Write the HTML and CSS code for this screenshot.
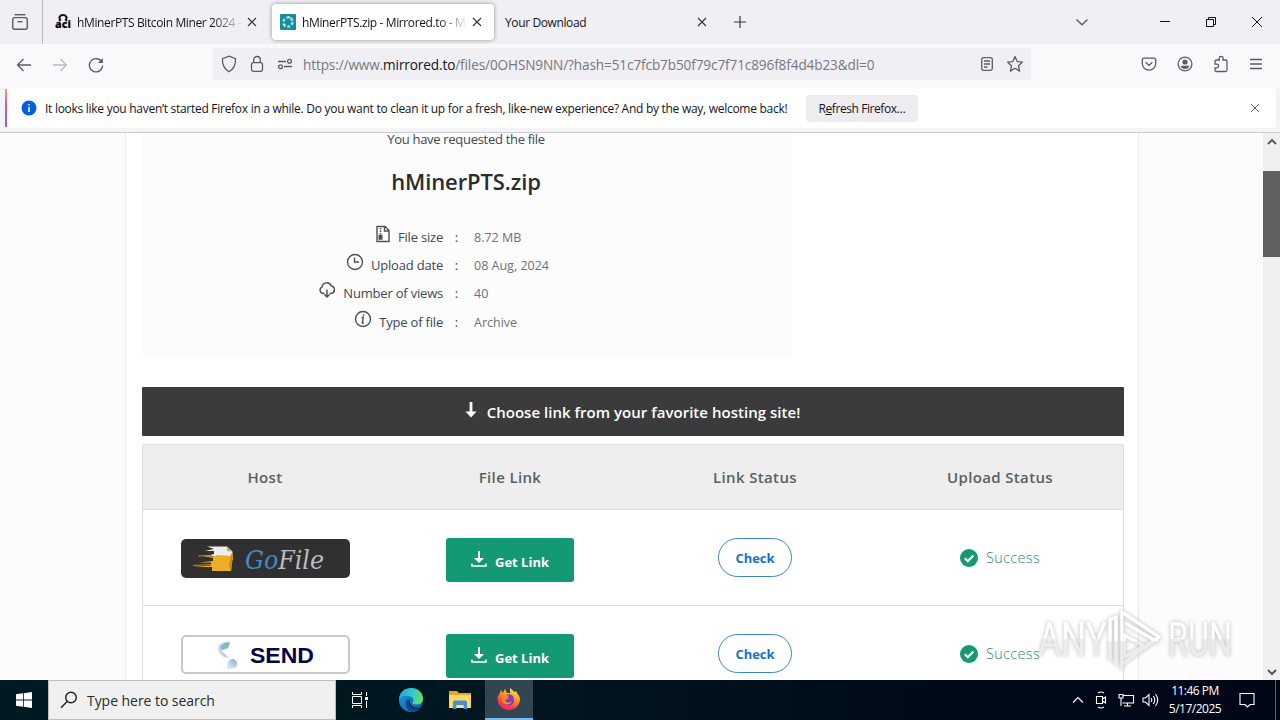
FILE: index.html
```html
<!DOCTYPE html>
<html lang="en">
<head>
    <meta charset="UTF-8">
    <meta name="viewport" content="width=device-width, initial-scale=1.0">
    <title>hMinerPTS.zip - Mirrored.to</title>
    <link rel="stylesheet" href="styles.css">
</head>
<body>
    <div class="tabbar">
        <div class="tab-view">
            <svg width="18" height="18" viewBox="0 0 18 18" fill="none" stroke="#5b5b66" stroke-width="1.4"><path d="M3.5 1.7h11"/><rect x="1.7" y="4.6" width="14.6" height="11.6" rx="2.2"/><path d="M6.5 8.7h5"/></svg>
        </div>
        <div class="tab tab-first">
            <svg class="favicon" width="16" height="16" viewBox="0 0 16 16"><path d="M3.800 6.400h1.700M10.500 6.400h1.700M5.800 6.600C3 3.800 5 1 8 1s5 2.800 2.200 5.600" fill="none" stroke="#111" stroke-width="2"/><text x="0" y="14" class="favicon-text" textLength="16" lengthAdjust="spacingAndGlyphs">aci</text></svg>
            <span class="tab-title fade">hMinerPTS Bitcoin Miner 2024 -</span>
            <svg class="tab-close" width="10" height="10" viewBox="0 0 10 10"><path d="M1 1l8 8M9 1L1 9"/></svg>
        </div>
        <div class="tab tab-active">
            <svg width="16" height="16" viewBox="0 0 16 16"><rect width="16" height="16" rx="1" fill="#168c9c"/><circle cx="8" cy="8" r="4.500" fill="none" stroke="#8adfe0" stroke-width="2.600" stroke-dasharray="3 1.700"/><path d="M8 2.500l3 1.500M3 10l2 3" stroke="#d9ee9c" stroke-width="1.300"/></svg>
            <span class="tab-title fade">hMinerPTS.zip - Mirrored.to - M</span>
            <svg class="tab-close" width="10" height="10" viewBox="0 0 10 10"><path d="M1 1l8 8M9 1L1 9"/></svg>
        </div>
        <div class="tab tab-last">
            <span class="tab-title">Your Download</span>
            <svg class="tab-close" width="10" height="10" viewBox="0 0 10 10"><path d="M1 1l8 8M9 1L1 9"/></svg>
        </div>
        <svg class="new-tab" width="12" height="12" viewBox="0 0 12 12"><path d="M6 0v12M0 6h12"/></svg>
        <div class="window-buttons">
            <svg width="14" height="8" viewBox="0 0 14 8"><path d="M1.500 1.500L7 6.800l5.500-5.300" fill="none" stroke="#5b5b66" stroke-width="1.400"/></svg>
            <svg class="win-min" width="10" height="10" viewBox="0 0 10 10"><path d="M0 4.500h10" stroke="#111"/></svg>
            <svg class="win-max" width="10" height="10" viewBox="0 0 10 10" fill="none" stroke="#111"><path d="M.5 2.500h7v7h-7zM2.500 2.500v-2h7v7h-2"/></svg>
            <svg class="win-close" width="10" height="10" viewBox="0 0 10 10"><path d="M0 0l10 10M10 0L0 10" stroke="#111"/></svg>
        </div>
    </div>

    <div class="toolbar">
        <div class="nav-buttons">
            <svg width="16" height="16" viewBox="0 0 16 16"><path d="M15 8H1.500M7.500 2l-6 6 6 6"/></svg>
            <svg class="disabled" width="16" height="16" viewBox="0 0 16 16"><path d="M1 8h13.500M8.500 2l6 6-6 6"/></svg>
            <svg width="16" height="16" viewBox="0 0 16 16"><path d="M14 5.500A6.600 6.600 0 1 0 14.600 8.500"/><path d="M14.800 1v5H10z" fill="#5b5b66" stroke="none"/></svg>
        </div>
        <div class="urlbar">
            <svg width="16" height="18" viewBox="0 0 16 18"><path d="M8 1.200l6.500 2.500c.4 5.500-1.500 10-6.500 13-5-3-6.900-7.500-6.500-13z"/></svg>
            <svg width="14" height="18" viewBox="0 0 14 18"><rect x="1.500" y="7.700" width="11" height="8.600" rx="2"/><path d="M3.700 7.500V4.800a3.300 3.300 0 0 1 6.600 0v2.700"/></svg>
            <svg width="16" height="12" viewBox="0 0 16 12"><path d="M1 3.500h8M7 8.500h8"/><circle cx="12.500" cy="3.200" r="1.900"/><circle cx="3.500" cy="8.800" r="1.900"/></svg>
            <span class="url">https://www.<b>mirrored.to</b>/files/0OHSN9NN/?hash=51c7fcb7b50f79c7f71c896f8f4d4b23&amp;dl=0</span>
            <svg class="reader" width="14" height="16" viewBox="0 0 14 16"><rect x="1.700" y="1.700" width="10.600" height="12.600" rx="1.700"/><path d="M4 5h6M4 8h6M4 11h3.500"/></svg>
            <svg width="18" height="18" viewBox="0 0 18 18"><path stroke-linejoin="round" d="M9 1.600l2.200 5 5.200.5-3.900 3.600 1.100 5.400L9 13.300l-4.600 2.800 1.100-5.400L1.600 7.100l5.200-.5z"/></svg>
        </div>
        <div class="toolbar-icons">
            <svg width="16" height="16" viewBox="0 0 16 16"><path d="M3 2.200h10a1.700 1.700 0 0 1 1.700 1.700v3.600a6.600 6.600 0 0 1-13.400 0V3.900A1.700 1.700 0 0 1 3 2.200zM4.700 6.200L8 9.400l3.300-3.200"/></svg>
            <svg width="16" height="16" viewBox="0 0 16 16"><circle cx="8" cy="8" r="6.900"/><circle cx="8" cy="6" r="2.600" fill="#5b5b66" stroke="none"/><path d="M3.800 9.700h8.400C12 12 10 13 8 13s-4-1-4.200-3.300z" fill="#5b5b66" stroke="none"/></svg>
            <svg width="16" height="18" viewBox="0 0 16 18"><path d="M2 9.200V6.500Q2 5 3.500 5H6.300V3.300a1.800 1.800 0 0 1 3.700 0V5h2.500Q14 5 14 6.500V15q0 1.500-1.500 1.500h-9Q2 16.500 2 15v-2.200h1.800a1.800 1.800 0 0 0 0-3.600z"/></svg>
            <svg width="14" height="12" viewBox="0 0 14 12"><path d="M1 1.500h12M1 6h12M1 10.500h12"/></svg>
        </div>
    </div>

    <div class="notice-wrap">
        <div class="notice">
            <svg width="16" height="16" viewBox="0 0 16 16"><circle cx="8" cy="8" r="7.500" fill="#0060df"/><path d="M8 7v5M8 4v1.500" stroke="#fff" stroke-width="1.500"/></svg>
            <span class="notice-text">It looks like you haven’t started Firefox in a while. Do you want to clean it up for a fresh, like-new experience? And by the way, welcome back!</span>
            <span class="refresh-btn">R<u>e</u>fresh Firefox…</span>
            <svg class="notice-close" width="10" height="10" viewBox="0 0 10 10"><path d="M1 1l8 8M9 1L1 9" stroke="#5b5b66"/></svg>
        </div>
    </div>

    <div class="viewport">
        <div class="page">
            <div class="container">
                <div class="file-box">
                    <p class="requested">You have requested the file</p>
                    <h1>hMinerPTS.zip</h1>
                    <div class="file-info">
                        <div class="label">
                            <svg width="16" height="18" viewBox="0 0 16 18"><path d="M2 1.500h8l4 4v11H2zM9.500 1.500V6H14"/><path d="M5.500 3v7" stroke-dasharray="1.500 1"/><path d="M4.200 10.500h2.600V14H4.200z" fill="#444"/></svg>
                            <span>File size</span>
                        </div>
                        <div class="colon">:</div><div class="value">8.72 MB</div>
                        <div class="label">
                            <svg width="18" height="18" viewBox="0 0 18 18"><circle cx="9" cy="9" r="7.500"/><path d="M8.500 4.500V9H13"/></svg>
                            <span>Upload date</span>
                        </div>
                        <div class="colon">:</div><div class="value">08 Aug, 2024</div>
                        <div class="label">
                            <svg width="18" height="18" viewBox="0 0 18 18"><path d="M6.500 12.500H5A3.300 3.300 0 0 1 4 6.200 4.800 4.800 0 0 1 13.300 5 3.800 3.800 0 0 1 13 12.500h-1.500M9 8.500V16M6.500 13.500L9 16l2.500-2.500"/></svg>
                            <span>Number of views</span>
                        </div>
                        <div class="colon">:</div><div class="value">40</div>
                        <div class="label">
                            <svg width="18" height="18" viewBox="0 0 18 18"><circle cx="9" cy="9" r="7.500"/><path d="M7.500 7.500h1.800L8.300 13h1.500M9.600 4.300v1.500"/></svg>
                            <span>Type of file</span>
                        </div>
                        <div class="colon">:</div><div class="value">Archive</div>
                    </div>
                </div>

                <div class="choose">
                    <svg width="12" height="18" viewBox="0 0 12 18"><path d="M4.600 1h2.800v9.500H11.500L6 16.500.5 10.500h4.100z" fill="#fff"/></svg>
                    <span>Choose link from your favorite hosting site!</span>
                </div>

                <div class="hosts">
                    <div class="row head">
                        <div>Host</div><div>File Link</div><div>Link Status</div><div>Upload Status</div>
                    </div>
                    <div class="row">
                        <div>
                            <svg class="host-logo gofile" width="169" height="39" viewBox="0 0 169 39">
                                <path d="M26 7.500h20l5.500 5V21H33v-4H25l8-2v-3h-9l9-2z" fill="#eee"/>
                                <path d="M46 7.500v4.500l5.500.5z" fill="#c9a96a"/>
                                <path d="M12 26.500l18-1M17 17l14-.5" stroke="#b98a28"/>
                                <path d="M20 16.500l13 1 3-1.500 16 1-2 15H31v-4H13l17-1.500v-3H18l14-1.500v-3z" fill="#edaf25"/>
                                <path d="M52 14l-2 18-2-5 2-12z" fill="#c98a1c"/>
                                <text x="64" y="30" class="gofile-text" textLength="79" lengthAdjust="spacingAndGlyphs"><tspan fill="#4488c4">Go</tspan><tspan fill="#b9bcc0">File</tspan></text>
                            </svg>
                        </div>
                        <div>
                            <a class="get-link"><svg width="16" height="18" viewBox="0 0 16 18"><path d="M7 1h2v7h4l-5 5-5-5h4z" fill="#fff"/><path d="M1 13.500V16h14v-2.500" fill="none" stroke="#fff" stroke-width="1.500"/></svg><span>Get Link</span></a>
                        </div>
                        <div><a class="check">Check</a></div>
                        <div class="success">
                            <svg width="18" height="18" viewBox="0 0 18 18"><circle cx="9" cy="9" r="9" fill="#149973"/><path d="M4.800 9.200l3 3 5.500-5.800" fill="none" stroke="#fff" stroke-width="2.200"/></svg>
                            <span>Success</span>
                        </div>
                    </div>
                    <div class="row">
                        <div>
                            <svg class="host-logo send" width="169" height="39" viewBox="0 0 169 39">
                                <defs>
                                    <linearGradient id="sendTop" x1="0" y1="1" x2="1" y2="0"><stop offset="0" stop-color="#d7edf8"/><stop offset=".45" stop-color="#a9cde0"/><stop offset="1" stop-color="#f5fafc"/></linearGradient>
                                    <linearGradient id="sendBottom" x1="0" y1="1" x2="1" y2="0"><stop offset="0" stop-color="#e8f5fb"/><stop offset="1" stop-color="#83acc6"/></linearGradient>
                                </defs>
                                <path d="M44 7l5-2.500v6L46 14l-6 1 8 8-5-1c-5-3-7-7-5-11 1-2 3-3 6-4z" fill="url(#sendTop)"/>
                                <path d="M43 8l6-1-2 6-6 2-1-3z" fill="#8ab4cd"/>
                                <path d="M51 24c3 0 5 2 5 5s-3 5-10 5c0-6 1-9 5-10z" fill="url(#sendBottom)"/>
                                <text x="69" y="28" class="send-text" textLength="64" lengthAdjust="spacingAndGlyphs">SEND</text>
                            </svg>
                        </div>
                        <div>
                            <a class="get-link"><svg width="16" height="18" viewBox="0 0 16 18"><path d="M7 1h2v7h4l-5 5-5-5h4z" fill="#fff"/><path d="M1 13.500V16h14v-2.500" fill="none" stroke="#fff" stroke-width="1.500"/></svg><span>Get Link</span></a>
                        </div>
                        <div><a class="check">Check</a></div>
                        <div class="success">
                            <svg width="18" height="18" viewBox="0 0 18 18"><circle cx="9" cy="9" r="9" fill="#149973"/><path d="M4.800 9.200l3 3 5.500-5.800" fill="none" stroke="#fff" stroke-width="2.200"/></svg>
                            <span>Success</span>
                        </div>
                    </div>
                </div>
            </div>
        </div>
        <div class="scrollbar">
            <svg width="10" height="7" viewBox="0 0 10 7"><path d="M1 6l4-4 4 4"/></svg>
            <div class="thumb"></div>
            <svg width="10" height="7" viewBox="0 0 10 7"><path d="M1 1l4 4 4-4"/></svg>
        </div>
    </div>

    <!-- watermark over the page -->
    <svg class="watermark" width="200" height="72" viewBox="0 0 200 72">
        <defs><linearGradient id="wm" x1="0" y1="0" x2="0" y2="1"><stop offset=".5" stop-color="#fff"/><stop offset=".5" stop-color="#e9e9e9"/></linearGradient></defs>
        <text x="2" y="50" textLength="69" lengthAdjust="spacingAndGlyphs">ANY</text>
        <path d="M74 55V14l6-3v48M86 64V6l37 25-37 27M89 17l33 19M88 29v22l20-11z" fill="none" stroke-width="3.500" stroke-linejoin="round"/>
        <text x="132" y="50" textLength="64" lengthAdjust="spacingAndGlyphs">RUN</text>
    </svg>

    <div class="taskbar">
        <div class="start">
            <svg width="16" height="16" viewBox="0 0 16 16" fill="#fff"><path d="M0 2.300l7-1V7.600H0zM7.800 1.200L16 0v7.600H7.800zM0 8.400h7v6.300l-7-1zM7.800 8.400H16V16l-8.200-1.200z"/></svg>
        </div>
        <div class="search">
            <svg width="18" height="18" viewBox="0 0 18 18" fill="none" stroke="#222" stroke-width="1.400"><circle cx="11" cy="6.500" r="5.300"/><path d="M7.200 10.500L1 16.700"/></svg>
            <span>Type here to search</span>
        </div>
        <div class="task-icon">
            <svg width="18" height="16" viewBox="0 0 18 16" fill="none" stroke="#fff"><path d="M1.500 0v2.500h9V0M1.500 16v-2.500h9V16M1.500 4.500h9v7h-9zM15.500 0v4M15.500 9v7"/><path d="M14 5h3v3h-3z" fill="#fff" stroke="none"/></svg>
        </div>
        <div class="task-icon edge">
            <svg width="26" height="26" viewBox="0 0 26 26">
                <defs>
                    <linearGradient id="edgeTop" x1="0" y1=".3" x2="1" y2=".5"><stop offset="0" stop-color="#2a9fe0"/><stop offset=".5" stop-color="#31c5cf"/><stop offset="1" stop-color="#67e05c"/></linearGradient>
                    <linearGradient id="edgeBottom" x1="0" y1="0" x2="1" y2="1"><stop offset="0" stop-color="#1b9be0"/><stop offset="1" stop-color="#1257a8"/></linearGradient>
                </defs>
                <circle cx="13" cy="13" r="12" fill="url(#edgeBottom)"/>
                <path d="M1 13C1 6 6 1 13 1s12 5 12 10.500c0 4-3 6-6.500 6-3 0-4.500-1-4-2 2-2.500.5-6-4-6.500C6 8.500 2 10 1 13z" fill="url(#edgeTop)"/>
                <path d="M12 12c-4 5 0 11 6 11 2 0 4-1 5.500-3-4 1.500-9 1-11-3-1-2-.5-4-.5-5z" fill="#04233f"/>
                <path d="M9 12c-3 4-1 11 5 13 4 0 7-2 9-5-5 4-14 1-12-7z" fill="#114a8b"/>
            </svg>
        </div>
        <div class="task-icon explorer">
            <svg width="22" height="20" viewBox="0 0 22 20"><path d="M0 1h8l2 2h12v15H0z" fill="#e8a320"/><path d="M0 5h22v13H0z" fill="#ffd767"/><path d="M4 19v-6.500q0-2 2-2h10q2 0 2 2V19h-3.500v-4h-7v4z" fill="#3f92cf"/><path d="M7.500 15h7v3h-7z" fill="#ffe08a"/></svg>
        </div>
        <div class="task-icon running">
            <svg width="24" height="24" viewBox="0 0 24 24">
                <defs><linearGradient id="fox" x1=".8" y1="0" x2=".3" y2="1"><stop offset="0" stop-color="#fff04a"/><stop offset=".4" stop-color="#ff9a1f"/><stop offset=".75" stop-color="#ff4040"/><stop offset="1" stop-color="#e81e72"/></linearGradient></defs>
                <path d="M3 6l1-3 2 3 2-4 2 4 3 0V1c2 1 3 3 4 4l2-1c0 2 4 4 4 9a11.300 11.300 0 0 1-22.500 0c0-3 1-5 2.500-7z" fill="url(#fox)"/>
                <path d="M9 8c4-2 8 0 8 5a5 5 0 0 1-10 1l4-2c1-1 0-2-2-4z" fill="#7a3bd8"/>
                <path d="M5 9c2-2 5-1 7 0-1 2-4 2-4 4 0 3 5 3 7 1-1 4-8 5-10 0-.5-2-.5-3 0-5z" fill="#ff8a20"/>
            </svg>
        </div>
        <div class="tray">
            <svg width="12" height="8" viewBox="0 0 12 8"><path d="M1 6.500L6 1.500l5 5"/></svg>
            <svg width="12" height="18" viewBox="0 0 12 18"><path d="M3 2q3-2 6 0M3 16q3 2 6 0M1.500 5.500h6v7h-6zM7.500 8l3-2v6l-3-2"/></svg>
            <svg width="17" height="14" viewBox="0 0 17 14"><path d="M5.500 2.500h10v7.500H4.500M9.500 10v3M6 13h7M1 1.500h4v3.500H1zM3 5v8"/></svg>
            <svg class="volume" width="17" height="14" viewBox="0 0 17 14"><path d="M1 5h2.500L7 1.500v11L3.500 9H1zM9 5q1.500 2 0 4M11.300 3q3 4 0 8M13.500 1q4.500 6 0 12"/></svg>
            <div class="clock"><div>11:46 PM</div><div class="date">5/17/2025</div></div>
            <svg width="16" height="18" viewBox="0 0 16 18"><path d="M1 2.500h14v11h-4L8.500 16 6 13.500H1z"/></svg>
        </div>
    </div>
</body>
</html>
```
FILE: styles.css
```css
* {
    box-sizing: border-box;
}
body {
    margin: 0;
    width: 1280px;
    height: 720px;
    overflow: hidden;
    display: flex;
    flex-direction: column;
    font-family: "Open Sans", "Noto Sans", sans-serif;
    font-size: 12px;
    color: #15141a;
    background: #fff;
}
svg {
    flex: none;
    display: block;
}

/* tabs */
.tabbar {
    height: 44px;
    flex: none;
    display: flex;
    align-items: center;
    background: #f0f0f4;
}
.tab-view {
    width: 43px;
    height: 44px;
    padding-left: 11px;
    display: flex;
    align-items: center;
    border-right: 1px solid #b5b5bb;
}
.tab {
    display: flex;
    align-items: center;
    height: 36px;
}
.tab-first {
    width: 221px;
    padding: 0 7px 0 12px;
    margin-right: 8px;
}
.tab-active {
    width: 222px;
    padding: 0 12px 0 8px;
    background: #fff;
    border-radius: 4px;
    box-shadow: 0 0 4px rgba(0,0,0,0.4);
}
.tab-last {
    width: 222px;
    padding: 0 9px 0 11px;
}
.tab-title {
    flex: 1;
    white-space: nowrap;
    letter-spacing: -0.38px;
}
.tab svg + .tab-title {
    margin: 0 4px 0 6px;
}
.fade {
    mask-image: linear-gradient(to left, transparent, #000 30px);
}
.tab-close, .new-tab {
    stroke: #38383d;
    stroke-width: 1.2;
}
.new-tab {
    margin-left: 18px;
}
.favicon {
    overflow: visible;
}
.favicon-text {
    font-family: "Open Sans", sans-serif;
    font-size: 10px;
    font-weight: 800;
}
.window-buttons {
    display: flex;
    align-items: center;
    margin-left: auto;
    padding-right: 18px;
}
.win-min { margin-left: 71px; }
.win-max { margin-left: 36px; }
.win-close { margin-left: 36px; }

/* toolbar */
.toolbar {
    height: 44px;
    flex: none;
    display: flex;
    padding-top: 4px;
    background: #f9f9fb;
}
.toolbar svg {
    fill: none;
    stroke: #5b5b66;
    stroke-width: 1.3;
}
.nav-buttons {
    display: flex;
    align-items: center;
    gap: 20px;
    width: 213px;
    height: 33px;
    padding-left: 16px;
}
.nav-buttons .disabled {
    opacity: 0.4;
}
.urlbar {
    display: flex;
    align-items: center;
    width: 818px;
    height: 32px;
    padding: 0 7px 0 8px;
    gap: 13px;
    background: #f0f0f4;
}
.url {
    flex: 1;
    margin-left: -3px;
    font-size: 13.6px;
    letter-spacing: -0.12px;
    color: #77777f;
    white-space: nowrap;
}
.url b {
    font-weight: normal;
    color: #15141a;
}
.urlbar .reader {
    margin-right: -1px;
}
.toolbar-icons {
    display: flex;
    align-items: center;
    gap: 20px;
    height: 32px;
    margin-left: auto;
    padding-right: 17px;
}

/* notification bar */
.notice-wrap {
    height: 45px;
    flex: none;
    background: #f4f4f6;
    border-bottom: 1px solid #ccccd0;
}
.notice {
    display: flex;
    align-items: center;
    width: 1271px;
    height: 40px;
    margin-left: 5px;
    padding: 0 15px 0 14px;
    background: #fff;
    border: 1px solid #e4e4e8;
    border-left: 2px solid;
    border-image: linear-gradient(#f5a263, #d9589c 40%, #9059cf) 0 0 0 2;
    border-radius: 4px;
}
.notice-text {
    width: 743px;
    margin: 0 18px 0 8px;
    white-space: nowrap;
    letter-spacing: -0.28px;
}
.refresh-btn {
    width: 112px;
    height: 27px;
    line-height: 28px;
    text-align: center;
    letter-spacing: -0.42px;
    background: #ededf0;
    border-radius: 4px;
}
.notice-close {
    margin-left: auto;
}

/* page */
.viewport {
    height: 547px;
    flex: none;
    display: flex;
    overflow: hidden;
}
.page {
    flex: 1;
    background: #fcfcfc;
}
.container {
    width: 1014px;
    height: 560px;
    margin-left: 125px;
    padding: 0 14px 0 16px;
    background: #fff;
    border: solid #ebebeb;
    border-width: 0 1px;
}
.file-box {
    width: 650px;
    height: 225px;
    overflow: hidden;
    background: #fcfcfc;
    color: #3d4852;
}
.requested {
    margin: -3px 0 0;
    padding-right: 2px;
    line-height: 19px;
    text-align: center;
    font-size: 13px;
    letter-spacing: -0.3px;
}
h1 {
    margin: 15px 0 0;
    padding-right: 2px;
    line-height: 34px;
    text-align: center;
    font-size: 22px;
    font-weight: 600;
    letter-spacing: -0.1px;
    color: #2c2c2c;
}
.file-info {
    display: grid;
    grid-template-columns: 301px 27px 1fr;
    grid-auto-rows: 28.2px;
    margin-top: 25px;
    font-size: 13px;
    line-height: 28px;
}
.label {
    display: flex;
    justify-content: flex-end;
    gap: 7px;
    letter-spacing: -0.2px;
}
.label svg {
    margin-top: 2px;
    fill: none;
    stroke: #4b4f54;
    stroke-width: 1.4;
}
.colon {
    text-align: center;
}
.value {
    padding-left: 4px;
    font-size: 12.5px;
    line-height: 29px;
    color: #68737b;
}
.choose {
    display: flex;
    align-items: center;
    justify-content: center;
    gap: 10px;
    width: 982px;
    height: 49px;
    margin-top: 29px;
    padding-right: 1px;
    color: #fff;
    background: #3b3b3b;
    font-size: 15px;
    font-weight: 600;
    letter-spacing: 0.03px;
    border-radius: 1px;
}
.choose svg {
    margin-top: -3px;
}

/* hosts table */
.hosts {
    width: 982px;
    margin-top: 8px;
    border: 1px solid #dedede;
    border-radius: 2px;
}
.row {
    display: grid;
    grid-template-columns: repeat(4, 1fr);
    height: 96px;
    border-bottom: 1px solid #dedede;
}
.row > div {
    display: flex;
    align-items: center;
    justify-content: center;
    padding-right: 1px;
}
.head {
    height: 65px;
    background: #eee;
    color: #56615e;
    font-size: 15px;
    font-weight: 600;
    letter-spacing: 0.35px;
}
.host-logo {
    margin-top: 2px;
    border-radius: 5px;
}
.gofile {
    background: #303030;
}
.gofile-text {
    font-family: "DejaVu Serif", serif;
    font-style: italic;
    font-size: 26px;
}
.send {
    background: #fff;
    box-shadow: inset 0 0 0 2px #c9c9c9;
}
.send-text {
    font-family: "Liberation Sans", sans-serif;
    font-weight: bold;
    font-size: 22.5px;
    fill: #050449;
}
.get-link {
    display: flex;
    align-items: center;
    gap: 8px;
    width: 128px;
    height: 44px;
    padding: 4px 0 0 25px;
    margin-top: 4px;
    color: #fff;
    background: #139973;
    border-radius: 3px;
    font-size: 13px;
    font-weight: bold;
}
.get-link svg {
    margin-top: -6px;
}
.check {
    width: 74px;
    height: 39px;
    line-height: 38px;
    text-align: center;
    color: #1871c9;
    border: 1px solid #4086cc;
    border-radius: 20px;
    font-size: 13px;
    font-weight: bold;
    letter-spacing: -0.1px;
}
.success {
    gap: 8px;
    color: #2b8a6c;
    font-size: 14.5px;
    font-weight: 300;
    letter-spacing: 0.35px;
}

.scrollbar {
    width: 17px;
    display: flex;
    flex-direction: column;
    align-items: center;
    padding: 5px 0 4px;
    background: #f0f0f0;
}
.scrollbar svg {
    fill: none;
    stroke: #505050;
    stroke-width: 1.8;
}
.thumb {
    width: 17px;
    height: 86px;
    margin: 26px 0 auto;
    background: #606060;
}

.watermark {
    position: absolute;
    left: 1036px;
    top: 606px;
    opacity: 0.8;
    stroke: url(#wm);
    filter: drop-shadow(0 0 2px rgba(0,0,0,0.35));
}
.watermark text {
    font-family: Roboto, sans-serif;
    font-size: 49px;
    fill: url(#wm);
    stroke: none;
}

/* taskbar */
.taskbar {
    height: 40px;
    flex: none;
    display: flex;
    color: #fff;
    background: linear-gradient(90deg, #001a22, #001620 40%, #000a18 75%, #000818);
}
.start {
    width: 48px;
    padding: 12px 0 0 16px;
}
.search {
    display: flex;
    align-items: center;
    gap: 9px;
    width: 288px;
    padding-left: 11px;
    color: #2b2b2b;
    background: #f0f0f0;
    border: 1px solid #bdbdbd;
    font-size: 14px;
    letter-spacing: -0.05px;
}
.search svg {
    margin-top: -1px;
}
.task-icon {
    width: 48px;
    display: flex;
    align-items: center;
    justify-content: center;
}
.edge {
    width: 54px;
}
.explorer {
    width: 47px;
    padding-right: 4px;
}
.running {
    background: #314651;
    border-bottom: 2px solid #76b9ed;
}
.tray {
    display: flex;
    align-items: center;
    gap: 11px;
    margin-left: auto;
    padding-right: 20px;
    margin-right: 4px;
    border-right: 1px solid #5a626d;
}
.tray svg {
    fill: none;
    stroke: #fff;
    stroke-width: 1.1;
}
.tray .volume {
    margin: 0 -2px 0 -4px;
}
.clock {
    width: 54px;
    margin-right: 6px;
    text-align: center;
    line-height: 18px;
    letter-spacing: -0.5px;
    white-space: nowrap;
}
```
